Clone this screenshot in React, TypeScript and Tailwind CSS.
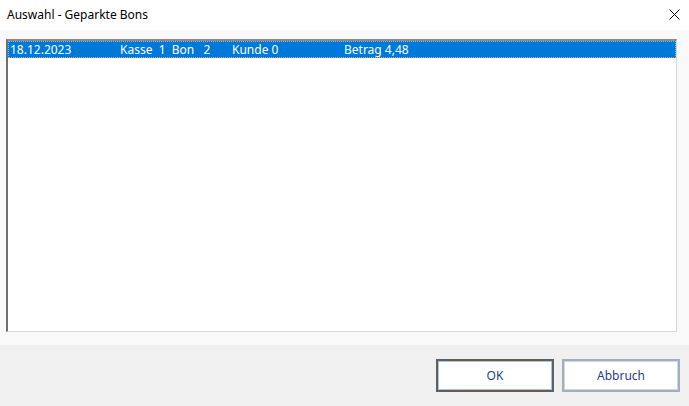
import React from "react";

export default function App() {
  const font = { fontFamily: '"Noto Sans", "Open Sans", sans-serif' };
  return (
    <div className="w-[689px] h-[406px] flex flex-col bg-[#f0f0f0] overflow-hidden text-[12px] text-black" style={font}>
      <div className="h-[30px] bg-white flex items-center justify-between pl-[7px] pr-[9px] shrink-0">
        <span className="leading-none">Auswahl - Geparkte Bons</span>
        <svg width="11" height="11" viewBox="0 0 11 11" className="mt-[-2px]">
          <path d="M0.5 0.5 L10.5 10.5 M10.5 0.5 L0.5 10.5" stroke="#000" strokeWidth="1" />
        </svg>
      </div>
      <div className="h-[315px] bg-[#f9f9f9] pt-[9px] pl-[6px] pr-[12px] shrink-0">
        <div className="h-[293px] bg-white border-t-2 border-l-2 border-b border-r border-t-[#8a8a8a] border-l-[#6e6e6e] border-b-[#d9d9d9] border-r-[#d9d9d9] pt-[0px]">
          <div className="h-[17px] bg-[#0078d7] text-white flex items-center outline-1 outline-dotted outline-[#f0a050] -outline-offset-1 leading-none">
            <span className="w-[112px] pl-[2px]">18.12.2023</span>
            <span className="w-[112px] whitespace-pre">Kasse  1  Bon   2</span>
            <span className="w-[112px]">Kunde 0</span>
            <span>Betrag 4,48</span>
          </div>
        </div>
      </div>
      <div className="flex-1 flex justify-end items-start pt-[14px] pr-[9px] gap-[8px]">
        <button className="w-[118px] h-[33px] bg-white border-2 border-[#5f5f5f] text-[#1f3f86] flex items-center justify-center">
          <span className="w-full h-full border border-[#a8c4e8] flex items-center justify-center">OK</span>
        </button>
        <button className="w-[118px] h-[33px] bg-white border-2 border-[#a5adb8] text-[#1f3f86] flex items-center justify-center">
          <span className="w-full h-full border border-[#c8d8ee] flex items-center justify-center">Abbruch</span>
        </button>
      </div>
    </div>
  );
}
